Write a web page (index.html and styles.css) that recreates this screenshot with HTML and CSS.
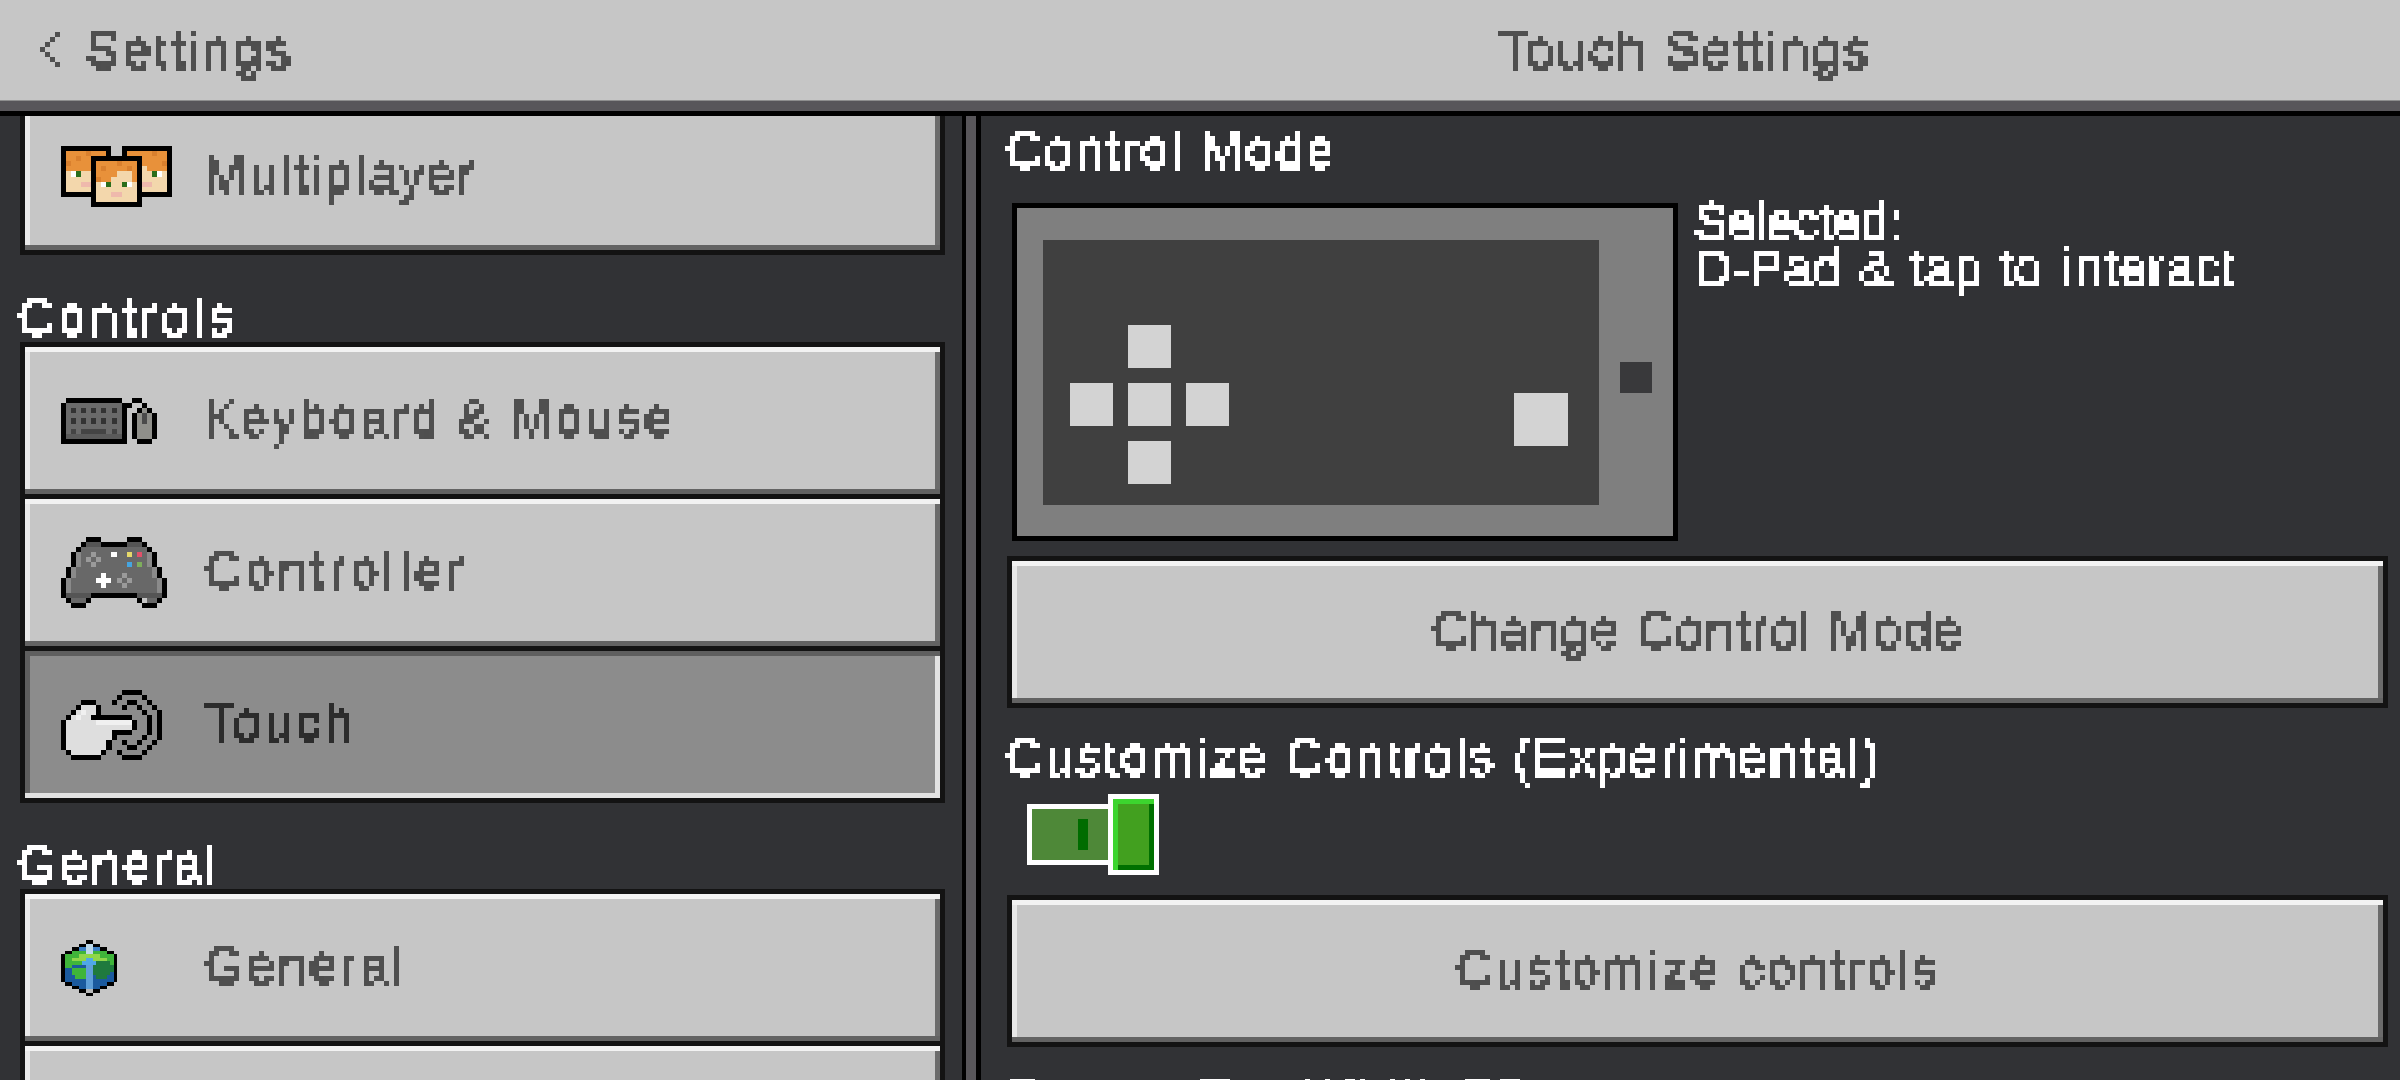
FILE: index.html
```html
<!DOCTYPE html>
<html lang="en">
<head>
<meta charset="utf-8">
<title>Touch Settings</title>
<link rel="stylesheet" href="styles.css">
</head>
<body>
<svg class="defs" aria-hidden="true">
  <filter id="pix" x="-3%" y="-15%" width="106%" height="130%" color-interpolation-filters="sRGB" primitiveUnits="userSpaceOnUse">
    <feMorphology in="SourceGraphic" operator="dilate" radius="0 1" result="fat"/>
    <feFlood x="2" y="2" width="1" height="1" flood-color="#000"/>
    <feComposite width="5" height="5"/>
    <feTile result="grid"/>
    <feComposite in="fat" in2="grid" operator="in"/>
    <feComponentTransfer><feFuncA type="discrete" tableValues="0 1 1 1"/></feComponentTransfer>
    <feMorphology operator="dilate" radius="2"/>
  </filter>
</svg>
<div class="app">
  <header class="top">
    <div class="top-left">
      <svg class="chev" viewBox="0 0 4 7" shape-rendering="crispEdges"><path fill="#4f4f4f" d="M3 0h1v1H3zM2 1h1v1H2zM1 2h1v1H1zM0 3h1v1H0zM1 4h1v1H1zM2 5h1v1H2zM3 6h1v1H3z"/></svg>
      <span class="t ls-settings">Settings</span>
    </div>
    <div class="top-right"><span class="t ls-touchset">Touch Settings</span></div>
  </header>
  <main class="body">
    <nav class="side">
      <div class="group first">
        <div class="btn">
          <span class="ico">
            <svg class="i-multi" viewBox="0 0 22 12" shape-rendering="crispEdges">
              <path fill="#000" d="M0 0h10v10H0zM12 0h10v10H12z"/>
              <path fill="#f3d7ac" d="M1 1h8v8H1zM13 1h8v8H13z"/>
              <path fill="#e8913a" d="M1 1h8v3H1zM1 4h6v1H1zM13 1h8v3H13zM17 4h4v1h-4z"/>
              <path fill="#d9802e" d="M3 2h1v1H3zM5 1h1v1H5zM1 3h1v1H1zM15 2h1v1h-1zM18 1h1v1h-1zM20 3h1v1h-1z"/>
              <path fill="#fff" d="M2 5h1v1H2zM19 5h1v1h-1z"/>
              <path fill="#2a6e1c" d="M3 5h1v1H3zM18 5h1v1h-1z"/>
              <path fill="#efb9ac" d="M4 7h2v1H4zM16 7h2v1h-2z"/>
              <path fill="#000" d="M6 2h10v10H6z"/>
              <path fill="#f3d7ac" d="M7 3h8v8H7z"/>
              <path fill="#e8913a" d="M7 3h8v2H7zM7 5h4v1H7zM14 5h1v1h-1zM7 6h3v1H7zM14 6h1v1h-1z"/>
              <path fill="#d9802e" d="M8 4h1v1H8zM11 3h1v1h-1zM13 4h1v1h-1zM7 6h1v1H7z"/>
              <path fill="#fff" d="M8 7h1v1H8zM13 7h1v1h-1z"/>
              <path fill="#2a6e1c" d="M9 7h1v1H9zM12 7h1v1h-1z"/>
              <path fill="#efb9ac" d="M10 9h2v1h-2z"/>
            </svg>
          </span>
          <span class="t ls-multi">Multiplayer</span>
        </div>
      </div>
      <div class="label"><span class="t ls-controls">Controls</span></div>
      <div class="group">
        <div class="btn">
          <span class="ico">
            <svg class="i-keys" viewBox="0 0 19 9" shape-rendering="crispEdges">
              <path fill="#000" d="M1 0h11v1H1zM0 1h1v8H0zM1 8h12v1H1zM12 2h1v6h-1zM12 1h2v1h-2zM14 0h2v1h-2zM16 1h1v1h-1zM15 2h1v1h-1zM17 2h1v1h-1zM14 3h1v5h-1zM18 3h1v5h-1zM15 8h3v1h-3z"/>
              <path fill="#6a6a6a" d="M1 1h11v6H1z"/>
              <path fill="#5a5a5a" d="M1 7h11v1H1z"/>
              <path fill="#333" d="M2 2h1v1H2zM4 2h1v1H4zM6 2h1v1H6zM8 2h1v1H8zM10 2h1v1h-1zM2 4h1v1H2zM4 4h1v1H4zM6 4h1v1H6zM8 4h1v1H8zM10 4h1v1h-1z"/>
              <path fill="#444" d="M2 6h1v1H2zM4 6h5v1H4zM10 6h1v1h-1z"/>
              <path fill="#8f8f8a" d="M16 2h1v1h-1zM15 3h3v5h-3z"/>
              <path fill="#4a4a4a" d="M16 3h1v2h-1z"/>
            </svg>
          </span>
          <span class="t ls-keyboard">Keyboard &amp; Mouse</span>
        </div>
        <div class="btn">
          <span class="ico">
            <svg class="i-pad" viewBox="0 0 21 14" shape-rendering="crispEdges">
              <path fill="#686868" d="M5 1h3v1h5V1h3v1h1v1h1v3h1v2h1v4h-1v1h-2v-1h-1v-1H6v1H5v1H2v-1H1V8h1V6h0V3h1V2h1V1z"/>
              <path fill="#8a8a8a" d="M3 3h1v3H3zM17 3h1v3h-1zM2 6h1v2H2zM18 6h1v2h-1zM1 8h1v3H1zM19 8h1v3h-1z"/>
              <path fill="#555" d="M5 1h3v1H5zM13 1h3v1h-3zM1 11h5v1H1zM15 11h5v1h-5z"/>
              <path fill="#000" d="M5 0h3v1H5zM13 0h3v1h-3zM4 1h1v1H4zM8 1h5v1H8zM16 1h1v1h-1zM3 2h1v1H3zM17 2h1v1h-1zM2 3h1v3H2zM18 3h1v3h-1zM1 6h1v2H1zM19 6h1v2h-1zM0 8h1v4H0zM20 8h1v4h-1zM1 12h1v1H1zM5 12h1v1H5zM6 11h9v1H6zM15 12h1v1h-1zM19 12h1v1h-1zM2 13h3v1H2zM16 13h3v1h-3z"/>
              <path fill="#9a9a9a" d="M6 3h1v1H6zM5 4h1v1H5zM7 4h1v1H7zM6 5h1v1H6zM12 7h1v1h-1zM11 8h1v1h-1zM13 8h1v1h-1zM12 9h1v1h-1z"/>
              <path fill="#fff" d="M10 3h1v1h-1zM8 7h1v3H8zM7 8h3v1H7z"/>
              <path fill="#e6d96a" d="M13 3h1v1h-1z"/>
              <path fill="#e0516a" d="M15 3h1v1h-1z"/>
              <path fill="#45a5e0" d="M13 5h1v1h-1z"/>
              <path fill="#7eae5c" d="M15 5h1v1h-1z"/>
            </svg>
          </span>
          <span class="t ls-controller">Controller</span>
        </div>
        <div class="btn on">
          <span class="ico">
            <svg class="i-touch" viewBox="0 0 20 14" shape-rendering="crispEdges">
              <path fill="#dedede" d="M4 3h3v3h7v2h-4v2H9v2H8v1H2v-1H1V6h1V5h1V4h1z"/>
              <path fill="#f0f0f0" d="M3 5h1V4h1v1H4v1H3zM7 6h7v1H7z"/>
              <path fill="#000" d="M4 2h3v1H4zM3 3h1v1H3zM7 3h1v2H7zM2 4h1v1H2zM1 5h1v1H1zM0 6h1v6H0zM6 5h8v1H6zM14 6h1v2h-1zM10 8h4v1h-4zM10 9h1v1h-1zM9 10h1v2H9zM8 12h1v1H8zM1 12h1v1H1zM2 13h6v1H2z"/>
              <path fill="#000" d="M12 0h4v1h-4zM11 1h1v1h-1zM16 1h1v1h-1zM10 2h1v1h-1zM17 2h1v1h-1zM18 3h1v1h-1zM19 4h1v6h-1zM18 10h1v1h-1zM17 11h1v1h-1zM16 12h1v1h-1zM11 12h1v1h-1zM12 13h4v1h-4z"/>
              <path fill="#000" d="M13 2h2v1h-2zM12 3h1v1h-1zM15 3h1v1h-1zM16 4h1v1h-1zM17 5h1v4h-1zM16 9h1v1h-1zM15 10h1v1h-1zM12 10h1v1h-1zM13 11h2v1h-2z"/>
            </svg>
          </span>
          <span class="t ls-touch">Touch</span>
        </div>
      </div>
      <div class="label"><span class="t ls-general-l">General</span></div>
      <div class="group">
        <div class="btn">
          <span class="ico">
            <svg class="i-globe" viewBox="0 0 16 16" shape-rendering="crispEdges">
              <path fill="#1b5a9e" d="M7 1h2v1h2v1h2v1h2v8h-2v1h-2v1H9v1H7v-1H5v-1H3v-1H1V4h2V3h2V2h2z"/>
              <path fill="#3c7fc4" d="M5 2h2v1H5zM9 2h2v1H9z"/>
              <path fill="#3fb53a" d="M3 3h10v1H3zM1 4h14v3H1zM1 7h2v1H1zM3 8h4v2H3zM4 10h3v1H4z"/>
              <path fill="#1f7a3e" d="M9 6h5v4H9zM10 10h3v1h-3zM14 7h1v2h-1z"/>
              <path fill="#8fd64a" d="M5 4h6v1H5zM3 5h10v1H3z"/>
              <path fill="#4fa8e8" d="M7 5h2v1H7zM6 6h4v1H6z"/>
              <path fill="#bcd8ea" d="M7 1h2v3H7z"/>
              <path fill="#5f9fd8" d="M7 7h2v7H7z"/>
              <path fill="#b9b9b9" d="M7 14h2v1H7z"/>
              <path fill="#000" d="M7 0h2v1H7zM5 1h2v1H5zM9 1h2v1H9zM3 2h2v1H3zM11 2h2v1h-2zM1 3h2v1H1zM13 3h2v1h-2zM0 4h1v8H0zM15 4h1v8h-1zM1 12h2v1H1zM13 12h2v1h-2zM3 13h2v1H3zM11 13h2v1h-2zM5 14h2v1H5zM9 14h2v1H9zM7 15h2v1H7z"/>
            </svg>
          </span>
          <span class="t ls-general">General</span>
        </div>
        <div class="btn"></div>
      </div>
    </nav>
    <section class="panel">
      <div class="head first-head"><span class="t ls-mode">Control Mode</span></div>
      <div class="mode-row">
        <div class="preview">
          <div class="screen">
            <div class="dpad">
              <i class="key k-up"></i>
              <i class="key k-left"></i>
              <i class="key k-mid"></i>
              <i class="key k-right"></i>
              <i class="key k-down"></i>
            </div>
            <i class="big"></i>
          </div>
          <i class="home"></i>
        </div>
        <div class="info">
          <span class="t ls-selected">Selected:</span>
          <span class="t ls-dpad">D-Pad &amp; tap to <span class="nudge">interact</span></span>
        </div>
      </div>
      <div class="group wide">
        <div class="btn center"><span class="t ls-change">Change Control Mode</span></div>
      </div>
      <div class="head"><span class="t ls-custom">Customize Controls (Experimental)</span></div>
      <div class="toggle"><span class="track"><i class="notch"></i></span><span class="knob"></span></div>
      <div class="group">
        <div class="btn center"><span class="t ls-customb">Customize controls</span></div>
      </div>
      <div class="head cut"><span class="t ls-custom">Sensor Tap Width 75</span></div>
    </section>
  </main>
</div>
</body>
</html>
```
FILE: styles.css
```css
* { box-sizing: border-box; }
html, body { margin: 0; padding: 0; height: 100%; overflow: hidden; background: #313235; }
.defs { width: 0; height: 0; display: block; position: absolute; }
.app { width: 2400px; height: 1080px; display: flex; flex-direction: column; overflow: hidden; }

.t {
  display: block;
  font-family: "Liberation Sans", Arial, sans-serif;
  font-size: 51px;
  line-height: 60px;
  white-space: nowrap;
  filter: url(#pix);
}
.ls-settings { letter-spacing: 2.9px; }
.ls-touchset { letter-spacing: 2.8px; }
.ls-multi { letter-spacing: 2.4px; }
.ls-controls { letter-spacing: 3.8px; }
.ls-keyboard { letter-spacing: 2.3px; }
.ls-controller { letter-spacing: 4.3px; }
.ls-touch { letter-spacing: 3.2px; }
.ls-general { letter-spacing: 2.8px; }
.ls-general-l { letter-spacing: 3px; }
.ls-mode { letter-spacing: 2.1px; }
.ls-selected { letter-spacing: -.5px; }
.ls-dpad { letter-spacing: .7px; word-spacing: 1.5px; }
.nudge { margin-left: 4px; }
.ls-change { letter-spacing: 1.8px; }
.ls-custom { letter-spacing: 2.6px; }
.ls-customb { letter-spacing: 2.85px; }

.top {
  height: 116px;
  flex: none;
  display: flex;
  background: #c6c6c6;
  color: #4f4f4f;
  padding-top: 6px;
  padding-bottom: 15px;
  border-bottom: 5px solid #000;
  box-shadow: inset 0 -10px 0 #58565a, inset 0 -11px 0 #8e8e8e;
}
.top-left { width: 981px; flex: none; display: flex; align-items: center; padding: 0 0 0 40px; }
.top-right { width: 1407px; flex: none; display: flex; align-items: center; justify-content: center; }
.chev { width: 20px; height: 35px; margin: -3px 26px 0 0; flex: none; }

.body { flex: 1; min-height: 0; display: flex; overflow: hidden; }
.side { width: 962px; flex: none; padding: 0 17px 0 20px; }
.group { background: #131313; padding: 5px; display: flex; flex-direction: column; gap: 5px; flex: none; }
.group.first { margin-top: -18px; margin-bottom: 1px; }
.side .group { width: 925px; }
.label { height: 86px; display: flex; align-items: flex-end; color: #fff; margin-left: -3px; }
.label .t { margin-bottom: -6px; }

.btn {
  height: 147px;
  flex: none;
  display: flex;
  align-items: center;
  padding-left: 36px;
  color: #4f4f4f;
  background: #c6c6c6;
  box-shadow: inset 0 5px 0 #f2f2f2, inset 0 -5px 0 #636363, inset 5px 0 0 #e8e8e8, inset -5px 0 0 #6b6b6b;
}
.btn .t { margin-top: -3px; }
.btn.on {
  color: #2c2c2c;
  background: #8c8c8c;
  box-shadow: inset 0 5px 0 #5f5f5f, inset 0 -5px 0 #e2e2e2, inset 5px 0 0 #5f5f5f, inset -5px 0 0 #e2e2e2;
}
.btn.center { height: 142px; padding: 0; justify-content: center; }
.ico { width: 143px; flex: none; display: flex; align-items: center; }
.ico svg { display: block; }
.i-multi { width: 111px; height: 61px; }
.i-keys { width: 96px; height: 46px; }
.i-pad { width: 106px; height: 71px; }
.i-touch { width: 101px; height: 72px; }
.i-globe { width: 56px; height: 56px; }

.panel {
  flex: none;
  width: 1438px;
  padding: 0 12px 0 41px;
  border-left: 4px solid #000;
  background-color: #313235;
  background-image: linear-gradient(#000, #000), linear-gradient(#58565a, #58565a);
  background-repeat: no-repeat;
  background-size: 5px 100%, 10px 100%;
  background-position: 10px 0, 0 0;
}
.head { height: 87px; color: #fff; display: flex; align-items: center; padding-bottom: 17px; margin-left: -2px; }
.panel > .head:not(.first-head):not(.cut) { height: 86px; padding: 13px 0 0; }
.head.cut { height: 60px; align-items: flex-start; padding: 22px 0 0; }

.mode-row { display: flex; gap: 16px; margin-left: 5px; }
.preview {
  width: 666px;
  height: 338px;
  flex: none;
  border: 5px solid #000;
  background: #7f7f7f;
  display: flex;
  align-items: flex-start;
  padding: 32px 21px 0 26px;
}
.screen {
  width: 556px;
  height: 265px;
  flex: none;
  background: #404040;
  display: flex;
  justify-content: space-between;
  align-items: flex-end;
  padding: 0 31px 21px 27px;
}
.dpad { display: grid; grid-template-columns: repeat(3, 43px); grid-template-rows: repeat(3, 43px); column-gap: 15px; row-gap: 15px; }
.key { display: block; background: #d3d3d3; }
.k-up { grid-area: 1 / 2; }
.k-left { grid-area: 2 / 1; }
.k-mid { grid-area: 2 / 2; }
.k-right { grid-area: 2 / 3; }
.k-down { grid-area: 3 / 2; }
.big { display: block; width: 54px; height: 53px; background: #d3d3d3; margin-bottom: 38px; }
.home { display: block; width: 32px; height: 31px; background: #39393b; margin: 122px 0 0 21px; flex: none; }
.info { color: #fff; margin-top: -3px; display: flex; flex-direction: column; }
.info .t { line-height: 46px; }

.panel .group { margin-top: 15px; width: 1381px; }
.panel .toggle + .group { margin-top: 20px; }
.toggle { display: flex; align-items: center; height: 81px; margin-left: 20px; }
.track { display: flex; align-items: center; justify-content: flex-end; width: 81px; height: 61px; border: 5px solid #fff; border-right: 0; background: #4e8838; padding-right: 20px; }
.notch { display: block; width: 10px; height: 31px; background: #006c00; }
.knob {
  display: block;
  width: 51px;
  height: 81px;
  border: 5px solid #fff;
  background:
    linear-gradient(#3f9a20, #3f9a20) right top / 5px 5px no-repeat,
    linear-gradient(#3f9a20, #3f9a20) left bottom / 5px 5px no-repeat,
    #42a01f;
  box-shadow: inset 0 5px 0 #3cd52e, inset 5px 0 0 #3cd52e, inset 0 -5px 0 #007000, inset -5px 0 0 #007000;
}
```
